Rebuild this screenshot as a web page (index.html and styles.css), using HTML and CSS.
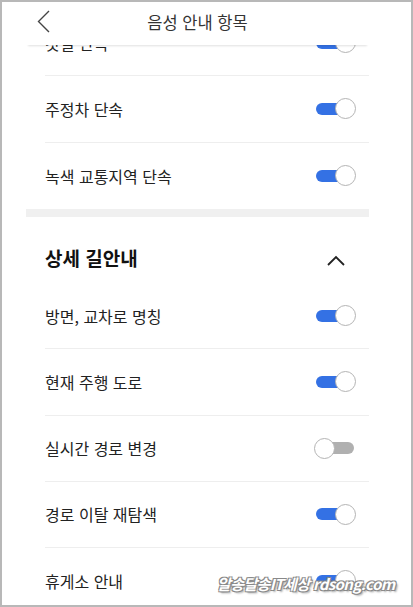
FILE: index.html
```html
<!DOCTYPE html>
<html lang="ko">
<head>
    <meta charset="UTF-8">
    <meta name="viewport" content="width=device-width, initial-scale=1.0">
    <title>음성 안내 항목</title>
    <link rel="stylesheet" href="styles.css">
</head>
<body>
    <div class="frame">
        <div class="screen">
            <div class="topbar">
                <span class="back">
                    <svg width="13" height="23" viewBox="0 0 13 23"><polyline points="12,1 1.5,11.5 12,22" fill="none" stroke="#444" stroke-width="1.4"/></svg>
                </span>
                <h1 class="title">음성 안내 항목</h1>
            </div>

            <div class="group">
                <div class="row"><span class="label">갓길 단속</span><span class="switch on"><i></i></span></div>
                <div class="row"><span class="label">주정차 단속</span><span class="switch on"><i></i></span></div>
                <div class="row last"><span class="label">녹색 교통지역 단속</span><span class="switch on"><i></i></span></div>
            </div>

            <div class="band"></div>

            <div class="group">
                <div class="group-head">
                    <span>상세 길안내</span>
                    <svg width="18" height="11" viewBox="0 0 18 11"><polyline points="1,10 9,2 17,10" fill="none" stroke="#222" stroke-width="1.8"/></svg>
                </div>
                <div class="row"><span class="label">방면, 교차로 명칭</span><span class="switch on"><i></i></span></div>
                <div class="row"><span class="label">현재 주행 도로</span><span class="switch on"><i></i></span></div>
                <div class="row"><span class="label">실시간 경로 변경</span><span class="switch"><i></i></span></div>
                <div class="row"><span class="label">경로 이탈 재탐색</span><span class="switch on"><i></i></span></div>
                <div class="row"><span class="label">휴게소 안내</span><span class="switch on"><i></i></span></div>
            </div>
        </div>
        <div class="watermark">알송달송IT세상 rdsong.com</div>
    </div>
</body>
</html>
```

FILE: styles.css
```css
body {
    margin: 0;
    background: #fff;
    font-family: "Noto Sans CJK KR", "Noto Sans", sans-serif;
    color: #222;
}
.frame {
    position: relative;
    width: 413px;
    height: 607px;
    box-sizing: border-box;
    border: 2px solid #b8b8b8;
    overflow: hidden;
    background: #fff;
}
.screen {
    position: relative;
    width: 343px;
    margin-left: 24px;
    padding-top: 8px;
}
.topbar {
    position: absolute;
    top: -2px;
    left: 0;
    right: 0;
    height: 45px;
    background: #fff;
    box-shadow: 0 3px 2px -2px rgba(0, 0, 0, 0.12);
    z-index: 2;
    display: flex;
    align-items: center;
    justify-content: center;
}
.back {
    position: absolute;
    left: 11px;
    top: 10px;
    display: flex;
}
.title {
    margin: 0;
    font-size: 16.5px;
    font-weight: 400;
    color: #333;
    padding-bottom: 1px;
}
.row {
    display: flex;
    align-items: center;
    justify-content: space-between;
    height: 66.25px;
    box-sizing: border-box;
    margin-left: 19px;
    padding-right: 13px;
    border-bottom: 1px solid #eeeeee;
}
.row.last {
    border-bottom: none;
}
.label {
    font-size: 16px;
    color: #222;
}
.band {
    height: 8px;
    background: #f0f0f0;
}
.group-head {
    height: 66.25px;
    box-sizing: border-box;
    margin-left: 19px;
    padding: 27px 24px 0 0;
    display: flex;
    justify-content: space-between;
    font-size: 19px;
    font-weight: 700;
    color: #111;
}
.group-head svg {
    margin-top: 11px;
}
.switch {
    position: relative;
    width: 42px;
    height: 21px;
}
.switch::before {
    content: "";
    position: absolute;
    left: 2px;
    right: 2px;
    top: 4.5px;
    height: 12px;
    border-radius: 6px;
    background: #b0b0b0;
}
.switch.on::before {
    background: #3471e4;
}
.switch i {
    position: absolute;
    top: 0;
    left: 0;
    width: 21px;
    height: 21px;
    box-sizing: border-box;
    border-radius: 50%;
    background: #fff;
    border: 1px solid #b4b4b4;
}
.switch.on i {
    left: auto;
    right: 0;
}
.watermark {
    position: absolute;
    left: 215px;
    top: 571px;
    font-size: 15px;
    font-weight: 700;
    font-style: italic;
    letter-spacing: -0.6px;
    color: #fff;
    white-space: nowrap;
    text-shadow: 1px 1px 0 #888, -1px -1px 0 #888, 1px -1px 0 #888, -1px 1px 0 #888, 2px 2px 2px rgba(0, 0, 0, 0.35);
}
```
